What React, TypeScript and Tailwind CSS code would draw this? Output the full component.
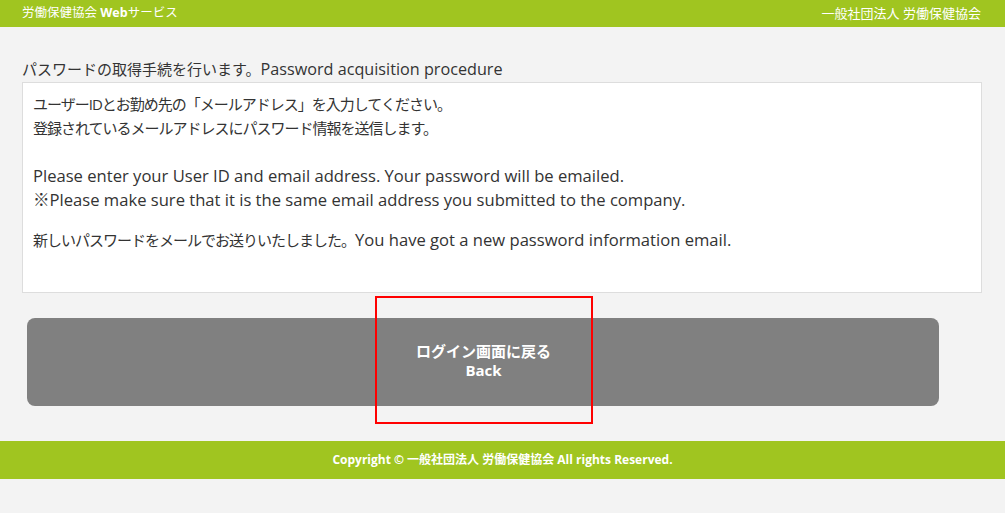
export default function App() {
  const font = {
    fontFamily: '"Open Sans", "Noto Sans CJK JP", sans-serif',
  }
  return (
    <div className="min-h-[513px] bg-[#f3f3f3] text-[#333]" style={font}>
      {/* ヘッダー */}
      <header className="h-[27px] bg-[#a0c520] px-[22px] flex items-center justify-between text-white text-[12.5px]">
        <div>
          労働保健協会 <span className="font-bold">Web</span>サービス
        </div>
        <div className="pr-[2px] text-[13px]">一般社団法人 労働保健協会</div>
      </header>

      <main className="px-[22px] pt-[32px]">
        <h1 className="text-[15px] leading-[20px] mb-[3px]">
          パスワードの取得手続を行います。
          <span className="text-[16.2px]">Password acquisition procedure</span>
        </h1>
        <div className="w-[960px] h-[211px] bg-white border border-[#dddddd] px-[10px] pt-[9px] text-[15px] leading-[24px]">
          <p className="tracking-[-1px]">
            ユーザーIDとお勤め先の「メールアドレス」を入力してください。
          </p>
          <p className="tracking-[-1px]">
            登録されているメールアドレスにパスワード情報を送信します。
          </p>
          <div className="text-[16.6px]">
            <p className="mt-[24px]">
              Please enter your User ID and email address. Your password will
              be emailed.
            </p>
            <p>
              ※Please make sure that it is the same email address you
              submitted to the company.
            </p>
          </div>
          <p className="mt-[16px]">
            <span className="tracking-[-1px]">
              新しいパスワードをメールでお送りいたしました。
            </span>
            <span className="text-[16.6px]">
              You have got a new password information email.
            </span>
          </p>
        </div>

        <div className="relative mt-[25px] ml-[5px] w-[912px] h-[88px] rounded-[8px] bg-[#808080] flex flex-col items-center justify-center text-white font-bold text-[15px] leading-[19px] pl-[1px]">
          <span className="-mt-[3px]">ログイン画面に戻る</span>
          <span>Back</span>
          <div className="absolute left-[348px] top-[-22px] w-[218px] h-[128px] border-2 border-[#ff0000]" />
        </div>
      </main>

      <footer className="mt-[35px] h-[38px] bg-[#a0c520] flex items-center justify-center text-white font-bold text-[12px]">
        Copyright © 一般社団法人 労働保健協会 All rights Reserved.
      </footer>
    </div>
  )
}
